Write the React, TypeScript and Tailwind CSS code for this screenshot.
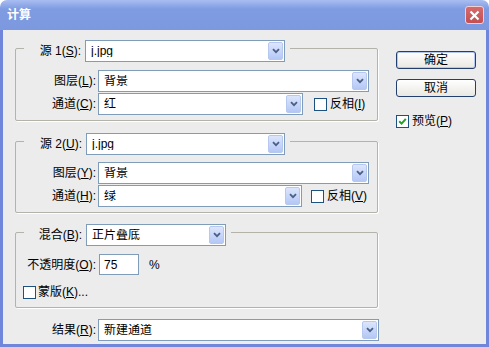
import React from 'react';

type SelectProps = { value: string; className?: string };

const Select: React.FC<SelectProps> = ({ value, className = '' }) => (
  <div className={`flex h-[22px] items-center border border-[#7f9db9] bg-white ${className}`}>
    <span className="flex-1 truncate pl-[5px] text-[12px] leading-none">{value}</span>
    <span className="mr-px flex h-[18px] w-[15px] items-center justify-center rounded-[2px] border border-[#b7c8f0] bg-gradient-to-b from-[#dce6fc] to-[#b4c7f5]">
      <svg width="8" height="6" viewBox="0 0 8 6">
        <path d="M1 1.2 L4 4.2 L7 1.2" stroke="#4a5f86" strokeWidth="1.8" fill="none" />
      </svg>
    </span>
  </div>
);

const Check: React.FC<{ checked?: boolean }> = ({ checked }) => (
  <span className="flex h-[13px] w-[13px] shrink-0 items-center justify-center border border-[#1c5180] bg-white">
    {checked && (
      <svg width="9" height="9" viewBox="0 0 9 9">
        <path d="M1.2 4.2 L3.6 6.6 L7.8 1.8" stroke="#21a121" strokeWidth="2" fill="none" />
      </svg>
    )}
  </span>
);

const Group: React.FC<{ header: React.ReactNode; className?: string; children: React.ReactNode }> = ({ header, className = '', children }) => (
  <div className={`w-[363px] rounded-[2px] border border-[#b3b3aa] shadow-[1px_1px_0_#ffffff] ${className}`}>
    <div className="-mt-[9px] ml-[8px] flex w-fit items-center bg-[#ececec] pr-[5px]">{header}</div>
    {children}
  </div>
);

const Label: React.FC<{ className?: string; children: React.ReactNode }> = ({ className = 'w-[80px]', children }) => (
  <span className={`shrink-0 text-right text-[12px] leading-none ${className}`}>{children}</span>
);

const App: React.FC = () => {
  return (
    <div className="flex h-[347px] w-[489px] flex-col font-['Liberation_Sans','Noto_Sans_CJK_SC',sans-serif] text-black">
      {/* title bar */}
      <div className="flex h-[30px] shrink-0 items-center justify-between rounded-t-[7px] bg-gradient-to-b from-[#a9bdf0] via-[#7f9ce2] via-30% to-[#7c98df] pl-[7px] pr-[5px]">
        <span className="text-[12px] font-bold text-white">计算</span>
        <span className="flex h-[18px] w-[19px] items-center justify-center rounded-[3px] border border-[#f3d0d0] bg-gradient-to-b from-[#d56a6c] to-[#c24f53]">
          <svg width="11" height="11" viewBox="0 0 11 11">
            <path d="M1.5 1.5 L9.5 9.5 M9.5 1.5 L1.5 9.5" stroke="#ffffff" strokeWidth="2.2" />
          </svg>
        </span>
      </div>

      {/* body */}
      <div className="flex flex-1 border-x-[3px] border-b-[3px] border-[#6f86db] bg-[#ececec] pl-[12px]">
        <div className="flex w-[364px] flex-col">
          <Group
            className="mt-[18px] pb-[5px]"
            header={
              <>
                <Label className="w-[58px] pr-[1px]">源 1(<u>S</u>):</Label>
                <Select value="j.jpg" className="ml-[3px] w-[200px]" />
              </>
            }
          >
            <div className="mt-[8px] flex items-center">
              <Label>图层(<u>L</u>):</Label>
              <Select value="背景" className="ml-[2px] w-[271px]" />
            </div>
            <div className="mt-[1px] flex items-center">
              <Label>通道(<u>C</u>):</Label>
              <Select value="红" className="ml-[2px] w-[205px]" />
              <span className="ml-[11px] flex items-center gap-[3px] text-[12px]">
                <Check />
                <span>反相(<u>I</u>)</span>
              </span>
            </div>
          </Group>

          <Group
            className="mt-[20px] pb-[5px]"
            header={
              <>
                <Label className="w-[59px] pr-[1px]">源 2(<u>U</u>):</Label>
                <Select value="j.jpg" className="ml-[3px] w-[199px]" />
              </>
            }
          >
            <div className="mt-[7px] flex items-center">
              <Label>图层(<u>Y</u>):</Label>
              <Select value="背景" className="ml-[2px] w-[271px]" />
            </div>
            <div className="mt-[1px] flex items-center">
              <Label>通道(<u>H</u>):</Label>
              <Select value="绿" className="ml-[2px] w-[204px]" />
              <span className="ml-[9px] flex items-center gap-[3px] text-[12px]">
                <Check />
                <span>反相(<u>V</u>)</span>
              </span>
            </div>
          </Group>

          <Group
            className="mt-[19px] pb-[6px]"
            header={
              <>
                <Label className="w-[59px] pr-[1px]">混合(<u>B</u>):</Label>
                <Select value="正片叠底" className="ml-[3px] w-[140px]" />
              </>
            }
          >
            <div className="mt-[8px] flex items-center">
              <Label>不透明度(<u>O</u>):</Label>
              <div className="ml-[3px] flex h-[21px] w-[40px] items-center border border-[#7f9db9] bg-white pl-[4px] text-[12px]">75</div>
              <span className="ml-[10px] text-[12px]">%</span>
            </div>
            <div className="ml-[7px] mt-[8px] flex items-center gap-[2px] text-[12px]">
              <Check />
              <span>蒙版(<u>K</u>)...</span>
            </div>
          </Group>

          <div className="mt-[11px] flex items-center">
            <Label className="w-[81px]">结果(<u>R</u>):</Label>
            <Select value="新建通道" className="ml-[2px] w-[281px]" />
          </div>
        </div>

        <div className="ml-[17px] flex flex-col pt-[21px]">
          <button className="h-[18px] w-[80px] rounded-[3px] border border-[#233f6e] bg-gradient-to-b from-white to-[#e9e8e2] text-[12px] leading-none shadow-[inset_0_0_0_1px_#b4c8ef]">
            确定
          </button>
          <button className="mt-[10px] h-[18px] w-[80px] rounded-[3px] border border-[#233f6e] bg-gradient-to-b from-white to-[#e9e8e2] text-[12px] leading-none">
            取消
          </button>
          <div className="mt-[15px] flex items-center gap-[3px] text-[12px]">
            <Check checked />
            <span>预览(<u>P</u>)</span>
          </div>
        </div>
      </div>
    </div>
  );
};

export default App;
